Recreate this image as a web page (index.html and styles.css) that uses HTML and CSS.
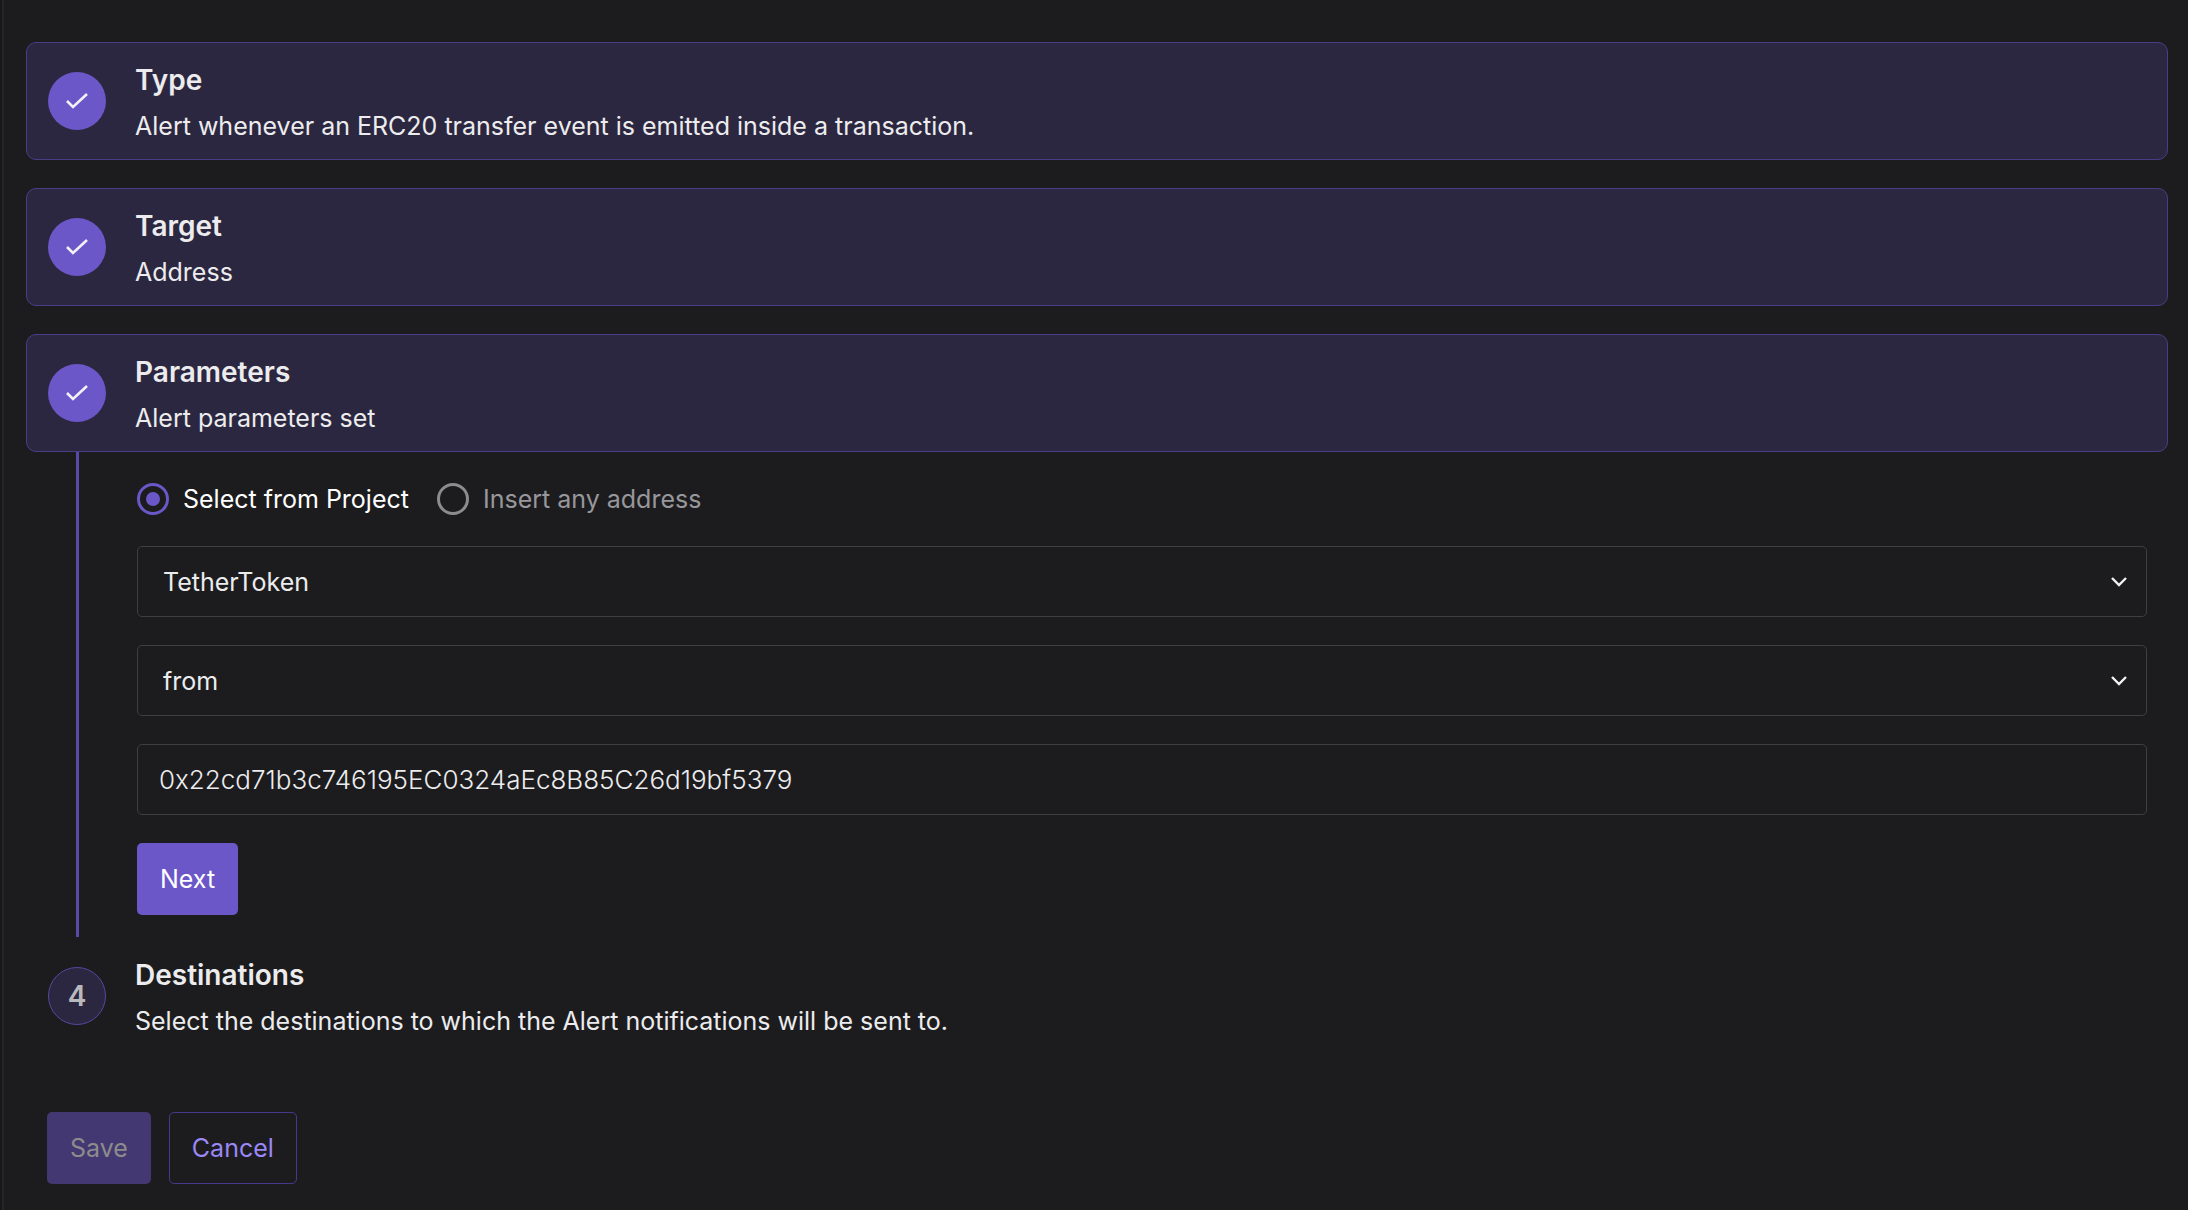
FILE: index.html
```html
<!DOCTYPE html>
<html lang="en">
<head>
    <meta charset="UTF-8">
    <meta name="viewport" content="width=device-width, initial-scale=1.0">
    <title>New Alert</title>
    <link rel="stylesheet" href="styles.css">
</head>
<body>
    <main class="panel">
        <form>
            <section class="step step-done">
                <span class="badge">
                    <svg width="24" height="18" viewBox="0 0 24 18"><path d="M2 9l6 6L22 2"/></svg>
                </span>
                <div>
                    <h2>Type</h2>
                    <p>Alert whenever an ERC20 transfer event is emitted inside a transaction.</p>
                </div>
            </section>

            <section class="step step-done">
                <span class="badge">
                    <svg width="24" height="18" viewBox="0 0 24 18"><path d="M2 9l6 6L22 2"/></svg>
                </span>
                <div>
                    <h2>Target</h2>
                    <p>Address</p>
                </div>
            </section>

            <section class="step step-done step-open">
                <span class="badge">
                    <svg width="24" height="18" viewBox="0 0 24 18"><path d="M2 9l6 6L22 2"/></svg>
                </span>
                <div>
                    <h2>Parameters</h2>
                    <p>Alert parameters set</p>
                </div>
            </section>

            <div class="step-body">
                <div class="radios">
                    <label><input type="radio" name="source" checked><span>Select from Project</span></label>
                    <label><input type="radio" name="source"><span>Insert any address</span></label>
                </div>
                <div class="select">
                    <select class="field" aria-label="Contract">
                        <option>TetherToken</option>
                    </select>
                    <svg width="18" height="12" viewBox="0 0 18 12"><path d="M2 2l7 7 7-7"/></svg>
                </div>
                <div class="select">
                    <select class="field" aria-label="Parameter">
                        <option>from</option>
                    </select>
                    <svg width="18" height="12" viewBox="0 0 18 12"><path d="M2 2l7 7 7-7"/></svg>
                </div>
                <input class="field address" type="text" aria-label="Address" value="0x22cd71b3c746195EC0324aEc8B85C26d19bf5379">
                <button class="btn btn-primary" type="button">Next</button>
            </div>

            <section class="step">
                <span class="badge badge-pending">4</span>
                <div>
                    <h2>Destinations</h2>
                    <p>Select the destinations to which the Alert notifications will be sent to.</p>
                </div>
            </section>

            <div class="actions">
                <button class="btn btn-primary" type="submit" disabled>Save</button>
                <button class="btn btn-outline" type="button">Cancel</button>
            </div>
        </form>
    </main>
</body>
</html>
```
FILE: styles.css
```css
* {
    box-sizing: border-box;
}
body {
    margin: 0;
    background-color: #18181a;
    color: #ececee;
    font-family: Inter, sans-serif;
    font-size: 25px;
    font-weight: 400;
    line-height: 32px;
}
h2, p {
    margin: 0;
}
h2 {
    font-size: 28px;
    font-weight: 600;
    line-height: 40px;
    margin-bottom: 10px;
}
.panel {
    min-height: 100vh;
    margin-left: 2px;
    padding: 42px 20px 26px 22px;
    border-left: 2px solid #252527;
    background-color: #1c1c1e;
}

/* steps */
.step {
    display: flex;
    align-items: center;
    gap: 29px;
    padding: 17px 21px;
    border: 1px solid transparent;
    border-radius: 10px;
}
.step-done {
    margin-bottom: 28px;
    border-color: #4a3d88;
    background-color: #2c2740;
}
.step-open {
    margin-bottom: 0;
}
.badge {
    display: flex;
    flex: none;
    align-items: center;
    justify-content: center;
    width: 58px;
    height: 58px;
    border-radius: 50%;
    background-color: #6b57c8;
}
.badge-pending {
    border: 1px solid #57479f;
    background-color: #2c2740;
    color: #b9b9bd;
    font-size: 28px;
    font-weight: 600;
}
svg {
    fill: none;
    stroke: #f2f2f4;
    stroke-width: 2.6;
}
.step-body {
    display: flex;
    flex-direction: column;
    gap: 28px;
    margin-left: 50px;
    padding: 31px 21px 22px 58px;
    border-left: 3px solid #5b4aa5;
}

/* form controls */
.radios {
    display: flex;
    gap: 28px;
    margin-bottom: 3px;
}
.radios label {
    display: flex;
    align-items: center;
    gap: 14px;
    color: #97979c;
}
.radios label:has(:checked) {
    color: #fff;
}
.radios input {
    appearance: none;
    width: 32px;
    height: 32px;
    margin: 0;
    border: 3px solid #8c8c8c;
    border-radius: 50%;
}
.radios input:checked {
    padding: 6px;
    border-color: #6b57c8;
    background: #6b57c8 content-box;
}
.field {
    appearance: none;
    width: 100%;
    height: 71px;
    padding: 0 21px;
    border: 1px solid #3f3f41;
    border-radius: 5px;
    background-color: transparent;
    color: inherit;
    font: inherit;
}
.address {
    font-size: 26px;
    font-weight: 300;
}
.select {
    display: grid;
    align-items: center;
}
.select select {
    grid-area: 1 / 1;
    padding: 0 25px;
}
.select svg {
    grid-area: 1 / 1;
    justify-self: end;
    margin-right: 19px;
    stroke-width: 2.4;
    pointer-events: none;
}
.btn {
    align-self: flex-start;
    height: 72px;
    padding: 0 22px;
    border: 1px solid transparent;
    border-radius: 5px;
    font: inherit;
}
.btn-primary {
    background-color: #6b57c8;
    color: #fff;
}
.btn-primary:disabled {
    background-color: #443872;
    color: #8c8c8c;
}
.btn-outline {
    border-color: #47398a;
    background-color: transparent;
    color: #9b87f5;
}
.actions {
    display: flex;
    gap: 18px;
    margin-top: 57px;
    padding-left: 21px;
}
```
